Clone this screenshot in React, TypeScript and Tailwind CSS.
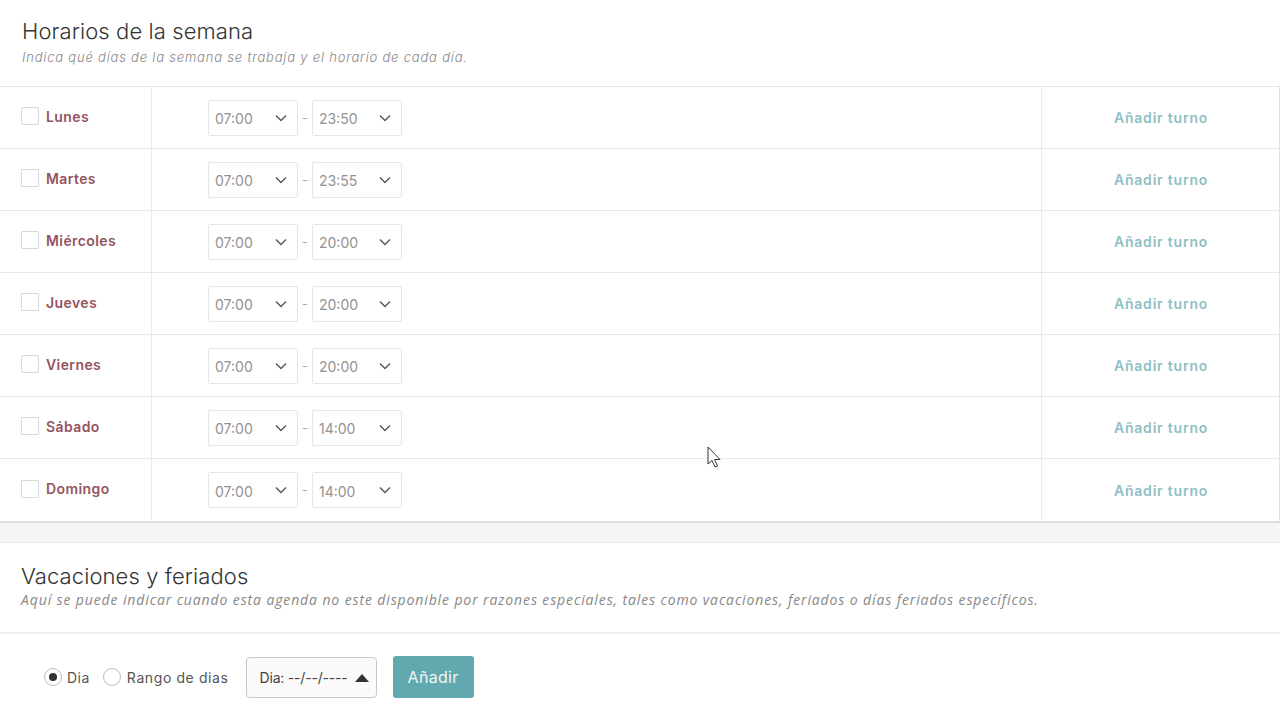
import React from "react";

const days = [
  { name: "Lunes", from: "07:00", to: "23:50" },
  { name: "Martes", from: "07:00", to: "23:55" },
  { name: "Miércoles", from: "07:00", to: "20:00" },
  { name: "Jueves", from: "07:00", to: "20:00" },
  { name: "Viernes", from: "07:00", to: "20:00" },
  { name: "Sábado", from: "07:00", to: "14:00" },
  { name: "Domingo", from: "07:00", to: "14:00" },
];

function Chevron() {
  return (
    <svg width="12" height="8" viewBox="0 0 12 8" fill="none">
      <path d="M1 1.5L6 6.5L11 1.5" stroke="#555" strokeWidth="1.3" />
    </svg>
  );
}

function Select({ value }: { value: string }) {
  return (
    <div className="w-[90px] h-[36px] border border-[#e6e6e6] rounded-[2px] flex items-center justify-between pl-[6px] pr-[10px] bg-white">
      <span className="text-[14px] text-[#929292] tracking-[0px] pt-[2px]">{value}</span>
      <Chevron />
    </div>
  );
}

export default function App() {
  return (
    <div className="w-[1280px] h-[720px] bg-white overflow-hidden relative" style={{ fontFamily: "Inter, 'Noto Sans', sans-serif" }}>
      <div className="pl-[22px] pt-[17px] h-[86px]">
        <h1 className="text-[22px] font-light text-[#333] leading-[28px] tracking-[0.1px]">Horarios de la semana</h1>
        <p className="text-[13px] italic font-light text-[#888] leading-[18px] mt-[3px] tracking-[0.8px]">
          Indica qué días de la semana se trabaja y el horario de cada día.
        </p>
      </div>
      <div className="border-t border-[#e8e8e8] border-r border-r-[#e0e0e0] border-b-2 border-b-[#dedede]">
        {days.map((d, i) => (
          <div key={d.name} className={`flex h-[62px] ${i < days.length - 1 ? "border-b border-[#e8e8e8]" : ""}`}>
            <div className="w-[152px] border-r border-[#efe8e8] flex items-center pl-[21px] gap-[7px] pb-[3px]">
              <div className="w-[18px] h-[18px] border border-[#d9d9d9] rounded-[1px] bg-white" />
              <span className="text-[14px] font-semibold text-[#94545e] tracking-[0.4px]">{d.name}</span>
            </div>
            <div className="flex-1 flex items-center pl-[56px] border-r border-[#ececec]">
              <Select value={d.from} />
              <span className="mx-[4px] text-[#aaa] text-[13px] pt-[2px]">-</span>
              <Select value={d.to} />
            </div>
            <div className="w-[237px] flex items-center justify-center pr-[1px]">
              <span className="text-[14px] font-semibold text-[#90bfc3] pl-[2px] tracking-[0.8px]">Añadir turno</span>
            </div>
          </div>
        ))}
      </div>
      <div className="h-[20px] bg-[#f4f6f5] border-b border-[#e6e6e6]" />
      <div className="pl-[21px] pt-[19px] h-[91px] border-b-2 border-[#eeeeee]">
        <h2 className="text-[22px] font-light text-[#333] leading-[28px] tracking-[0.1px]">Vacaciones y feriados</h2>
        <p className="text-[14px] italic text-[#888] leading-[18px] mt-[1px] tracking-[0.88px]" style={{ fontFamily: "'Open Sans', sans-serif" }}>
          Aquí se puede indicar cuando esta agenda no este disponible por razones especiales, tales como vacaciones, feriados o días feriados específicos.
        </p>
      </div>
      <div className="flex items-center pl-[44px] pt-[22px]">
        <div className="flex items-center gap-[5px]">
          <div className="w-[18px] h-[18px] rounded-full border border-[#bdbdbd] flex items-center justify-center">
            <div className="w-[8px] h-[8px] rounded-full bg-[#333]" />
          </div>
          <span className="text-[14px] text-[#555] tracking-[0.5px]">Dia</span>
        </div>
        <div className="flex items-center gap-[6px] ml-[13px]">
          <div className="w-[18px] h-[18px] rounded-full border border-[#bdbdbd]" />
          <span className="text-[14px] text-[#555] tracking-[0.6px]">Rango de dias</span>
        </div>
        <div className="ml-[17px] w-[131px] h-[41px] border border-[#c8c8c8] rounded-[4px] bg-[#fafafa] flex items-center pl-[13px] gap-[8px]">
          <span className="text-[14px] text-[#444] tracking-[-0.2px]">Dia: --/--/----</span>
          <svg width="14" height="9" viewBox="0 0 14 9">
            <path d="M0 9L7 1L14 9Z" fill="#333" />
          </svg>
        </div>
        <button className="ml-[16px] w-[81px] h-[42px] rounded-[3px] bg-[#62a9af] text-[16px] text-[#eef6f6] font-normal tracking-[0.3px]">
          Añadir
        </button>
      </div>
      <svg className="absolute left-[707px] top-[446px]" width="16" height="24" viewBox="0 0 16 24">
        <path d="M1 1L1 18L5 14.5L8 21L10.5 20L7.5 13.5L13 13.5Z" fill="white" stroke="#333" strokeWidth="1" strokeLinejoin="round" />
      </svg>
    </div>
  );
}
